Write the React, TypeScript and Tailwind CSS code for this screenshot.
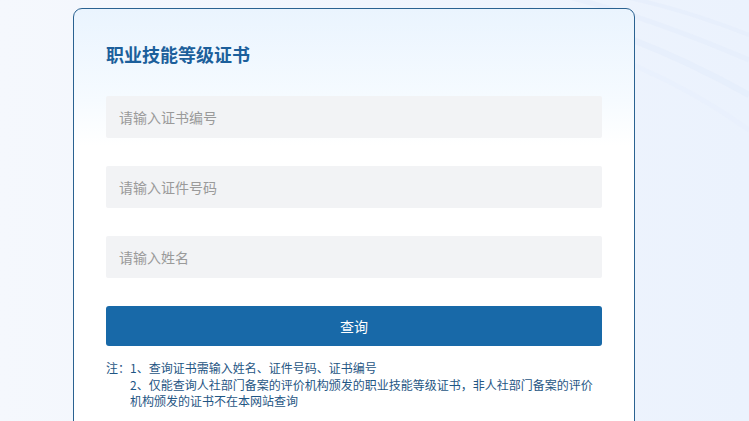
import React from 'react';

const fields = ['请输入证书编号', '请输入证件号码', '请输入姓名'];

const App: React.FC = () => {
  return (
    <div
      className="relative h-[421px] w-full overflow-hidden bg-gradient-to-r from-[#f5f8fd] via-[#f0f5fd] to-[#ebf2fd]"
      style={{ fontFamily: '"Noto Sans CJK SC", "Noto Sans", sans-serif' }}
    >
      {/* faint light streaks, top right */}
      <svg className="absolute right-0 top-0 h-[140px] w-[220px]" viewBox="0 0 220 140" fill="none">
        <path d="M0 10 C60 20 140 50 220 95" stroke="#e2ebfb" strokeWidth="6" opacity="0.5" />
        <path d="M10 -10 C80 5 150 30 220 60" stroke="#e2ebfb" strokeWidth="5" opacity="0.45" />
        <path d="M0 35 C70 45 150 80 220 130" stroke="#e4edfb" strokeWidth="5" opacity="0.35" />
        <path d="M60 -10 C120 0 170 15 220 35" stroke="#e2ebfb" strokeWidth="4" opacity="0.45" />
      </svg>

      <div className="relative ml-[73px] mt-[8px] h-[460px] w-[562px] rounded-[9px] border border-[#2a6291] bg-gradient-to-b from-[#eaf4fe] via-[#f6fbff] via-[20%] to-white to-[30%] px-[32px] pt-[32px]">
        <h1 className="text-[18px] font-bold leading-[26px] text-[#1c5f9b]">职业技能等级证书</h1>

        <div className="mt-[29px] flex flex-col gap-[28px]">
          {fields.map((f) => (
            <input
              key={f}
              placeholder={f}
              className="h-[42px] w-full rounded-[2px] bg-[#f2f3f5] px-[13px] text-[14px] text-[#333] outline-none placeholder:text-[#9a9a9a]"
            />
          ))}
        </div>

        <button className="mt-[28px] h-[40px] w-full rounded-[3px] bg-[#1869a8] text-[14px] text-white">查询</button>

        <div className="mt-[14px] flex text-[12px] leading-[16.5px] text-[#1f5684]">
          <span className="w-[24px] shrink-0">注：</span>
          <div className="flex-1">
            <p>1、查询证书需输入姓名、证件号码、证书编号</p>
            <p>2、仅能查询人社部门备案的评价机构颁发的职业技能等级证书，非人社部门备案的评价机构颁发的证书不在本网站查询</p>
          </div>
        </div>
      </div>
    </div>
  );
};

export default App;
